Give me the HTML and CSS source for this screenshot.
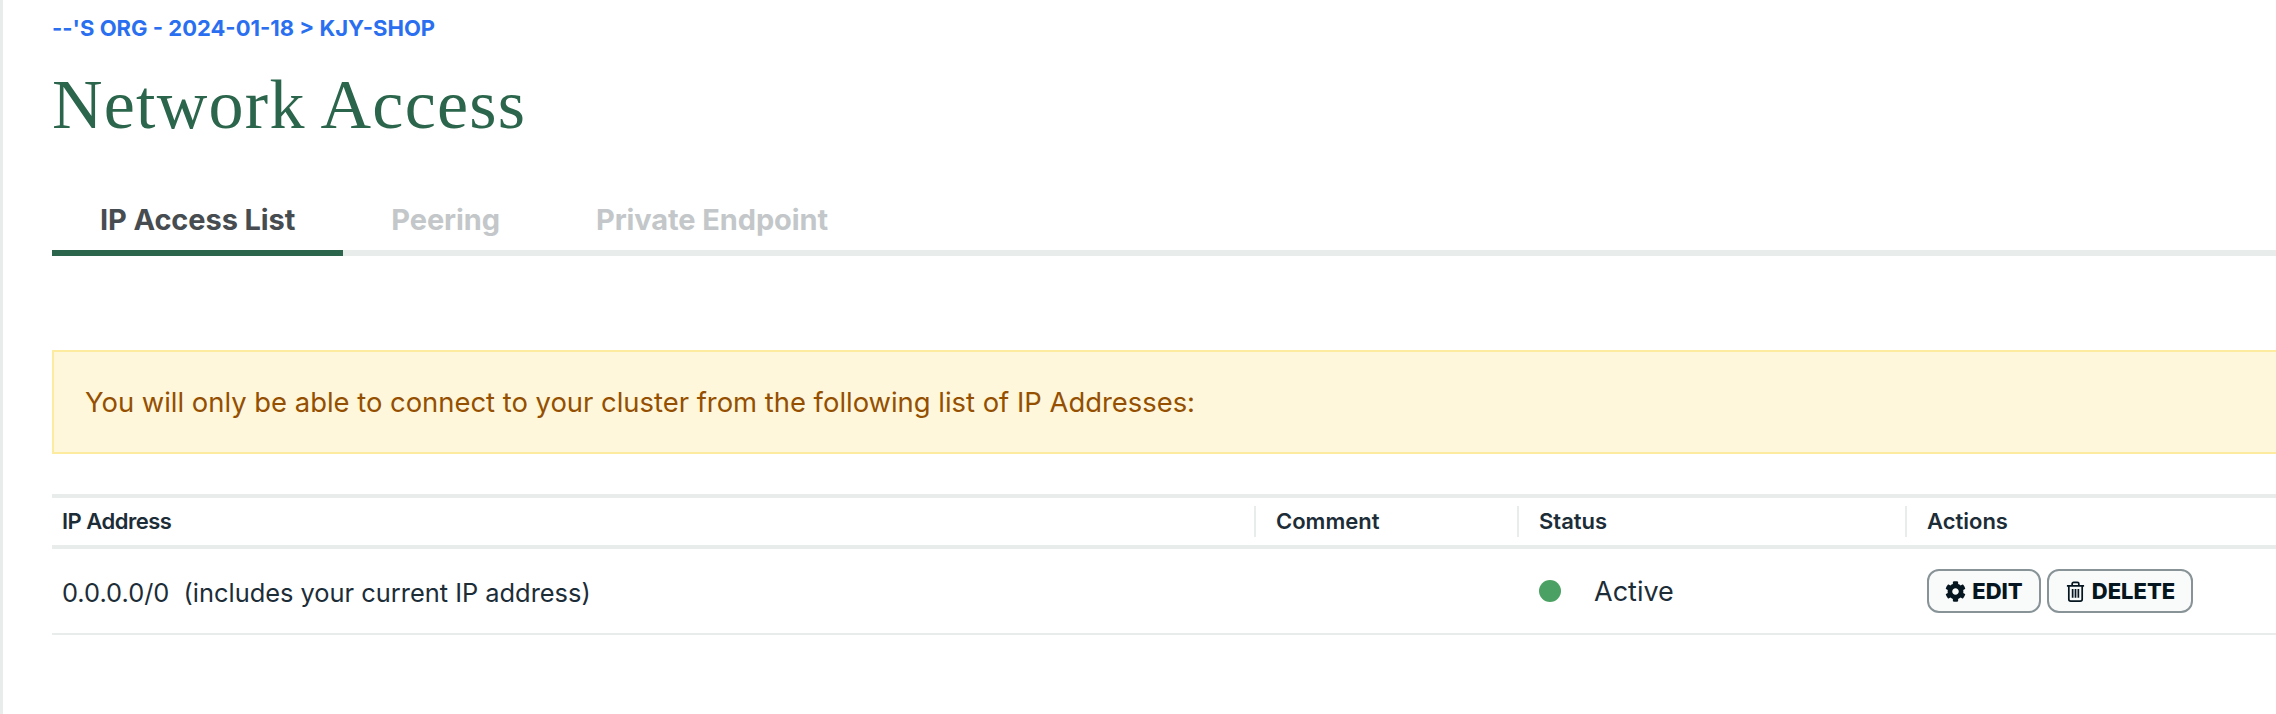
FILE: index.html
```html
<!DOCTYPE html>
<html lang="en">
<head>
  <meta charset="UTF-8" />
  <title>Network Access</title>
  <link rel="stylesheet" href="styles.css">
</head>
<body>
  <main class="page">
    <nav class="crumbs">--'S ORG - 2024-01-18 &gt; KJY-SHOP</nav>
    <h1>Network Access</h1>

    <div class="tabs">
      <a class="tab active">IP Access List</a>
      <a class="tab">Peering</a>
      <a class="tab">Private Endpoint</a>
    </div>

    <div class="banner">You will only be able to connect to your cluster from the following list of IP Addresses:</div>

    <div class="table">
      <div class="row head">
        <div class="cell">IP Address</div>
        <div class="cell">Comment</div>
        <div class="cell">Status</div>
        <div class="cell">Actions</div>
      </div>
      <div class="row body">
        <div class="cell">0.0.0.0/0&nbsp; (includes your current IP address)</div>
        <div class="cell"></div>
        <div class="cell status"><span class="dot"></span>Active</div>
        <div class="cell actions">
          <button class="btn edit">
            <svg class="icon" viewBox="0 0 512 512"><path fill="currentColor" d="M487.4 315.7l-42.6-24.6c4.3-23.2 4.3-47 0-70.2l42.6-24.6c4.9-2.8 7.1-8.6 5.5-14-11.1-35.6-30-67.8-54.7-94.6-3.8-4.1-10-5.1-14.8-2.3L380.8 110c-17.9-15.4-38.5-27.3-60.8-35.1V25.8c0-5.6-3.9-10.5-9.4-11.7-36.7-8.2-74.3-7.8-109.2 0-5.5 1.2-9.4 6.1-9.4 11.7V75c-22.2 7.9-42.8 19.8-60.8 35.1L88.7 85.5c-4.9-2.8-11-1.9-14.8 2.3-24.7 26.7-43.6 58.9-54.7 94.6-1.7 5.4.6 11.2 5.5 14L67.3 221c-4.3 23.2-4.3 47 0 70.2l-42.6 24.6c-4.9 2.8-7.1 8.6-5.5 14 11.1 35.6 30 67.8 54.7 94.6 3.8 4.1 10 5.1 14.8 2.3l42.6-24.6c17.9 15.4 38.5 27.3 60.8 35.1v49.2c0 5.6 3.9 10.5 9.4 11.7 36.7 8.2 74.3 7.8 109.2 0 5.5-1.2 9.4-6.1 9.4-11.7v-49.2c22.2-7.9 42.8-19.8 60.8-35.1l42.6 24.6c4.9 2.8 11 1.9 14.8-2.3 24.7-26.7 43.6-58.9 54.7-94.6 1.5-5.5-.7-11.3-5.6-14.1zM256 336c-44.1 0-80-35.9-80-80s35.9-80 80-80 80 35.9 80 80-35.9 80-80 80z"/></svg>
            EDIT
          </button>
          <button class="btn del">
            <svg class="icon trash" viewBox="0 0 20 22" fill="none" stroke="currentColor" stroke-width="1.8"><path d="M1 5h18M6.500 5V3a1.500 1.500 0 0 1 1.500-1.500h4A1.500 1.500 0 0 1 13.500 3v2M3 5v14a2 2 0 0 0 2 2h10a2 2 0 0 0 2-2V5M7 8.500v9M10 8.500v9M13 8.500v9"/></svg>
            DELETE
          </button>
        </div>
      </div>
    </div>
  </main>
</body>
</html>
```

FILE: styles.css
```css
html, body {
  margin: 0;
  height: 100%;
  background-color: #fff;
  overflow: hidden;
}
body {
  font-family: Inter, "Liberation Sans", sans-serif;
  color: #1c2d38;
}
.page {
  height: 100%;
  box-sizing: border-box;
  border-left: 3px solid #e8edeb;
  padding-left: 49px;
  padding-top: 16px;
}
.crumbs {
  font-size: 22px;
  line-height: 24px;
  font-weight: 700;
  color: #2a6ff0;
}
h1 {
  margin: 27px 0 0;
  font-family: "Liberation Serif", serif;
  font-weight: 400;
  font-size: 70px;
  line-height: 76px;
  letter-spacing: 1.25px;
  color: #2b664c;
}
/* tabs */
.tabs {
  box-sizing: border-box;
  display: flex;
  align-items: flex-start;
  margin-top: 53px;
  height: 60px;
  border-bottom: 6px solid #e8edeb;
}
.tab {
  box-sizing: border-box;
  height: 60px;
  padding: 0 48px;
  font-size: 29px;
  line-height: 48px;
  font-weight: 700;
  letter-spacing: -0.1px;
  color: #c3c7c9;
  white-space: nowrap;
}
.tab.active {
  color: #464c4f;
  border-bottom: 6px solid #2b664c;
}
/* banner */
.banner {
  box-sizing: border-box;
  margin-top: 94px;
  height: 104px;
  padding-left: 31px;
  background-color: #fef7db;
  border: 2px solid #fdeb9f;
  border-right: 0;
  font-size: 27.4px;
  line-height: 100px;
  color: #944f01;
}
/* table */
.table {
  margin-top: 40px;
}
.row {
  display: grid;
  grid-template-columns: 1202px 263px 388px 1fr;
}
.head {
  height: 47px;
  border-top: 4px solid #e8edeb;
  border-bottom: 4px solid #e8edeb;
  align-items: center;
  font-size: 22px;
  font-weight: 600;
}
.head .cell {
  padding-left: 20px;
  height: 31px;
  line-height: 31px;
  border-left: 2px solid #e8edeb;
}
.head .cell:first-child {
  padding-left: 10px;
  border-left: 0;
  letter-spacing: -0.5px;
}
.body {
  height: 84px;
  border-bottom: 2px solid #e8edeb;
  align-items: center;
  font-size: 25.4px;
}
.body .cell {
  padding-left: 22px;
}
.body .cell:first-child {
  padding-left: 10px;
  padding-top: 2px;
}
.status {
  display: flex;
  align-items: center;
  font-size: 27px;
}
.dot {
  width: 22px;
  height: 22px;
  margin-right: 33px;
  border-radius: 50%;
  background-color: #4ba163;
}
.actions {
  display: flex;
  gap: 6px;
}
.btn {
  box-sizing: border-box;
  display: flex;
  align-items: center;
  justify-content: center;
  gap: 6px;
  height: 44px;
  padding: 0;
  background-color: #f9fbfa;
  border: 2px solid #889397;
  border-radius: 12px;
  font-family: inherit;
  font-size: 22px;
  font-weight: 800;
  color: #061621;
}
.btn.edit {
  width: 114px;
}
.btn.del {
  width: 146px;
}
.icon {
  width: 21px;
  height: 21px;
}
```
